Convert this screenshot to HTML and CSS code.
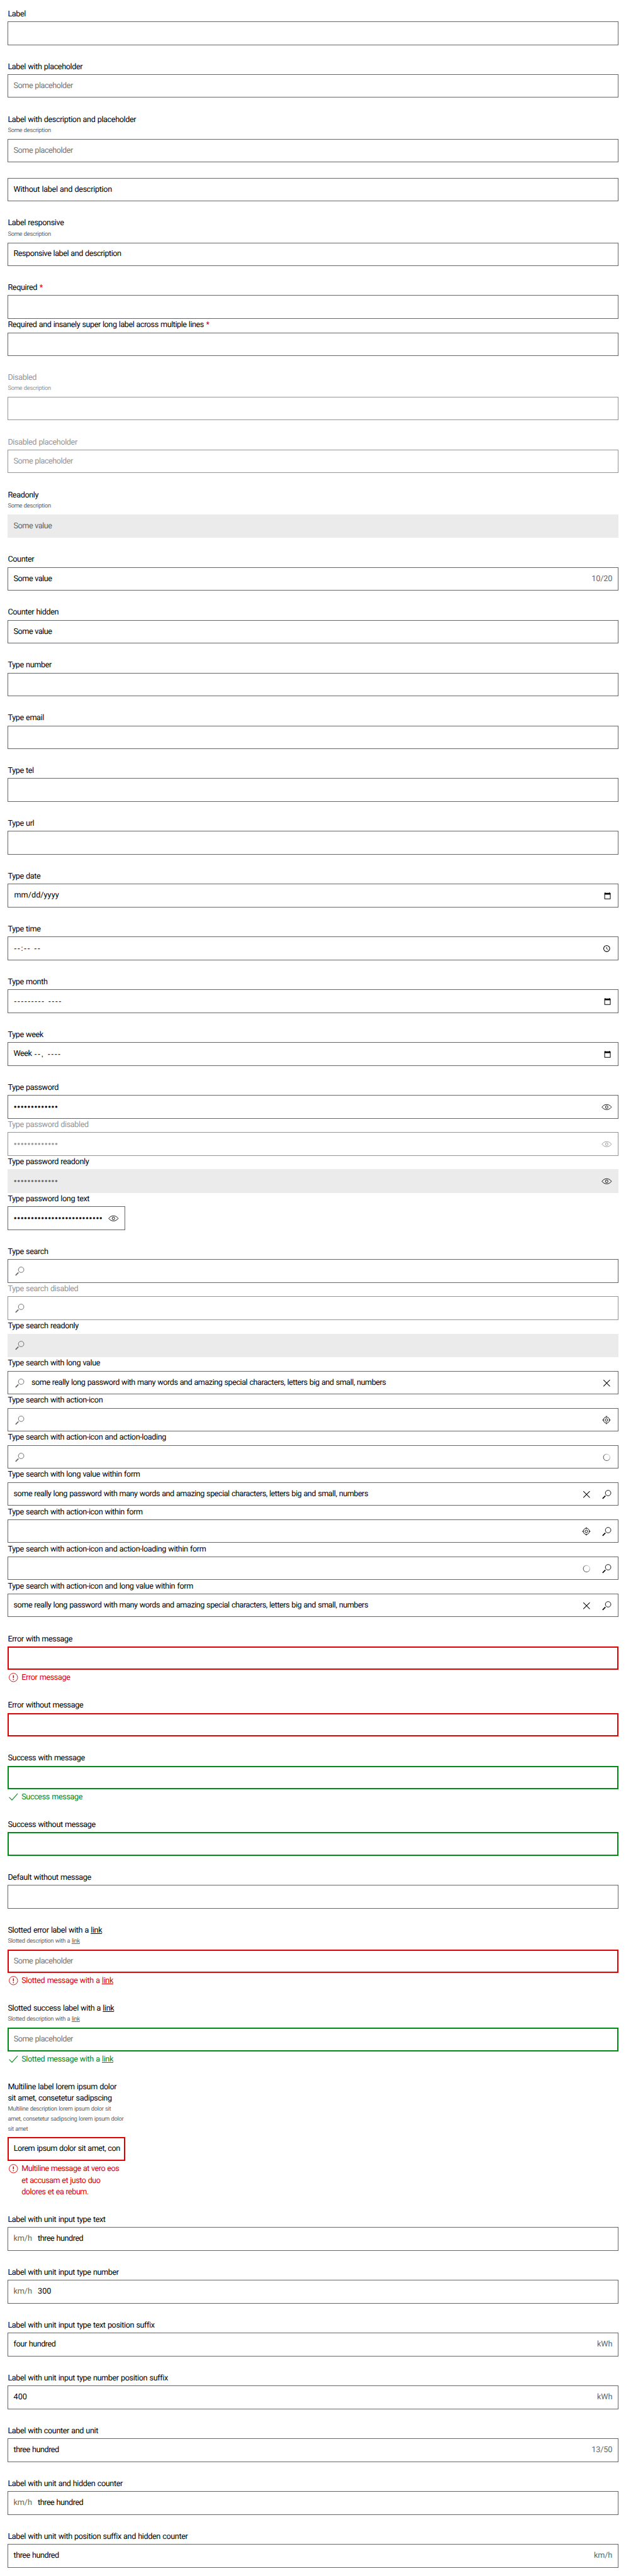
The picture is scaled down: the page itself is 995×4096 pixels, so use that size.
FILE: index.html
```
<!DOCTYPE html>
<html lang="en">
<head>
<meta charset="utf-8">
<title>Text field wrapper</title>
<link rel="stylesheet" href="styles.css">
</head>
<body>
<svg class="defs" aria-hidden="true">
  <defs>
    <linearGradient id="fade" x1="0" y1="1" x2="1" y2="0">
      <stop offset="0.3" stop-color="#535457"/>
      <stop offset="1" stop-color="#535457" stop-opacity="0.05"/>
    </linearGradient>
  </defs>
  <symbol id="search" viewBox="0 0 24 24"><circle cx="14.9" cy="9" r="5.6" fill="none" stroke="currentColor" stroke-width="1.2"/><path d="M9.4 14.6 3.6 20.4" fill="none" stroke="currentColor" stroke-width="2"/></symbol>
  <symbol id="eye" viewBox="0 0 24 24"><path d="M2.3 12C4.8 8.6 8.1 6.8 12 6.8s7.2 1.8 9.7 5.2c-2.5 3.4-5.8 5.2-9.7 5.2S4.8 15.4 2.3 12Z" fill="none" stroke="currentColor" stroke-width="1.2"/><circle cx="12" cy="12" r="2.6" fill="none" stroke="currentColor" stroke-width="1.2"/></symbol>
  <symbol id="close" viewBox="0 0 24 24"><path d="m5.4 5.400 13.200 13.200M18.600 5.400 5.400 18.600" fill="none" stroke="currentColor" stroke-width="1.300"/></symbol>
  <symbol id="target" viewBox="0 0 24 24"><g fill="none" stroke="currentColor" stroke-width="1.200"><circle cx="11.500" cy="11.500" r="6.200"/><circle cx="11.500" cy="11.500" r="2.700"/><path d="M11.500 3v2.800M11.500 17.200V20M3 11.500h2.800M17.200 11.500H20"/></g></symbol>
  <symbol id="spinner" viewBox="0 0 24 24"><circle cx="12" cy="12" r="6.700" fill="none" stroke="url(#fade)" stroke-width="1.300"/></symbol>
  <symbol id="calendar" viewBox="0 0 24 24"><path d="M8.700 5v2M17.700 5v2" stroke="#000" stroke-width="1.300"/><path d="M7.800 6h11.600a.6.6 0 0 1 .6.600V18.400a.6.600 0 0 1-.6.600H7.800a.6.600 0 0 1-.6-.6V6.600A.6.600 0 0 1 7.800 6Zm.7 3.800v7.900h10.200V9.800Z" fill="#000" fill-rule="evenodd"/></symbol>
  <symbol id="clock" viewBox="0 0 24 24"><circle cx="12" cy="12" r="6.200" fill="none" stroke="#000" stroke-width="1.400"/><path d="M11.700 8.500v3.700l3.100 1.700" fill="none" stroke="#000" stroke-width="1.100"/></symbol>
  <symbol id="error" viewBox="0 0 24 24"><circle cx="12" cy="12" r="8.600" fill="none" stroke="currentColor" stroke-width="1.200"/><path d="M12 7.300v6M12 15v2" stroke="currentColor" stroke-width="2"/></symbol>
  <symbol id="check" viewBox="0 0 24 24"><path d="m3.300 12.500 5.700 5.700L20.700 5" fill="none" stroke="currentColor" stroke-width="1.300"/></symbol>
</svg>

<section><label>Label</label><div class="box"></div></section>
<section><label>Label with placeholder</label><div class="box hint">Some placeholder</div></section>
<section><label>Label with description and placeholder</label><p class="desc">Some description</p><div class="box hint">Some placeholder</div></section>
<section><div class="box loose">Without label and description</div></section>
<section><label>Label responsive</label><p class="desc">Some description</p><div class="box">Responsive label and description</div></section>
<section>
  <label>Required <i>*</i></label><div class="box"></div>
  <label class="tight">Required and insanely super long label across multiple lines <i>*</i></label><div class="box"></div>
</section>
<section class="disabled"><label>Disabled</label><p class="desc">Some description</p><div class="box"></div></section>
<section class="disabled"><label>Disabled placeholder</label><div class="box">Some placeholder</div></section>
<section><label>Readonly</label><p class="desc">Some description</p><div class="box readonly">Some value</div></section>
<section><label>Counter</label><div class="box">Some value<span class="unit end">10/20</span></div></section>
<section><label>Counter hidden</label><div class="box">Some value</div></section>
<section><label>Type number</label><div class="box"></div></section>
<section><label>Type email</label><div class="box"></div></section>
<section><label>Type tel</label><div class="box"></div></section>
<section><label>Type url</label><div class="box"></div></section>
<section><label>Type date</label><div class="box"><span class="date">mm/dd/yyyy</span><span class="tools"><svg><use href="#calendar"/></svg></span></div></section>
<section><label>Type time</label><div class="box"><span class="dash">--:-- --</span><span class="tools"><svg><use href="#clock"/></svg></span></div></section>
<section><label>Type month</label><div class="box"><span class="dash">--------- ----</span><span class="tools"><svg><use href="#calendar"/></svg></span></div></section>
<section><label>Type week</label><div class="box"><span class="week">Week</span><span class="dash">--, ----</span><span class="tools"><svg><use href="#calendar"/></svg></span></div></section>
<section>
  <label>Type password</label><div class="box"><span class="dots">•••••••••••••</span><span class="tools"><svg><use href="#eye"/></svg></span></div>
  <div class="disabled"><label>Type password disabled</label><div class="box"><span class="dots">•••••••••••••</span><span class="tools"><svg><use href="#eye"/></svg></span></div></div>
  <label>Type password readonly</label><div class="box readonly"><span class="dots">•••••••••••••</span><span class="tools"><svg><use href="#eye"/></svg></span></div>
  <label>Type password long text</label><div class="box narrow"><span class="dots">••••••••••••••••••••••••••</span><span class="tools"><svg><use href="#eye"/></svg></span></div>
</section>
<section>
  <label>Type search</label><div class="box"><svg class="lead"><use href="#search"/></svg></div>
  <div class="disabled"><label>Type search disabled</label><div class="box"><svg class="lead"><use href="#search"/></svg></div></div>
  <label>Type search readonly</label><div class="box readonly"><svg class="lead"><use href="#search"/></svg></div>
  <label>Type search with long value</label><div class="box"><svg class="lead"><use href="#search"/></svg>some really long password with many words and amazing special characters, letters big and small, numbers<span class="tools"><svg><use href="#close"/></svg></span></div>
  <label>Type search with action-icon</label><div class="box"><svg class="lead"><use href="#search"/></svg><span class="tools"><svg><use href="#target"/></svg></span></div>
  <label>Type search with action-icon and action-loading</label><div class="box"><svg class="lead"><use href="#search"/></svg><span class="tools"><svg><use href="#spinner"/></svg></span></div>
  <label>Type search with long value within form</label><div class="box">some really long password with many words and amazing special characters, letters big and small, numbers<span class="tools"><svg><use href="#close"/></svg><svg><use href="#search"/></svg></span></div>
  <label>Type search with action-icon within form</label><div class="box"><span class="tools"><svg><use href="#target"/></svg><svg><use href="#search"/></svg></span></div>
  <label>Type search with action-icon and action-loading within form</label><div class="box"><span class="tools"><svg><use href="#spinner"/></svg><svg><use href="#search"/></svg></span></div>
  <label>Type search with action-icon and long value within form</label><div class="box">some really long password with many words and amazing special characters, letters big and small, numbers<span class="tools"><svg><use href="#close"/></svg><svg><use href="#search"/></svg></span></div>
</section>
<section class="error"><label>Error with message</label><div class="box"></div><div class="msg"><svg><use href="#error"/></svg><span>Error message</span></div></section>
<section class="error"><label>Error without message</label><div class="box"></div></section>
<section class="success"><label>Success with message</label><div class="box"></div><div class="msg"><svg><use href="#check"/></svg><span>Success message</span></div></section>
<section class="success"><label>Success without message</label><div class="box"></div></section>
<section><label>Default without message</label><div class="box"></div></section>
<section class="error"><label>Slotted error label with a <u>link</u></label><p class="desc">Slotted description with a <u>link</u></p><div class="box hint">Some placeholder</div><div class="msg"><svg><use href="#error"/></svg><span>Slotted message with a <u>link</u></span></div></section>
<section class="success"><label>Slotted success label with a <u>link</u></label><p class="desc">Slotted description with a <u>link</u></p><div class="box hint">Some placeholder</div><div class="msg"><svg><use href="#check"/></svg><span>Slotted message with a <u>link</u></span></div></section>
<section class="error multi"><label>Multiline label lorem ipsum dolor<br>sit amet, consetetur sadipscing</label><p class="desc">Multiline description lorem ipsum dolor sit<br>amet, consetetur sadipscing lorem ipsum dolor<br>sit amet</p><div class="box narrow">Lorem ipsum dolor sit amet, con</div><div class="msg"><svg><use href="#error"/></svg><span>Multiline message at vero eos<br>et accusam et justo duo<br>dolores et ea rebum.</span></div></section>
<section><label>Label with unit input type text</label><div class="box"><span class="unit start">km/h</span>three hundred</div></section>
<section><label>Label with unit input type number</label><div class="box"><span class="unit start">km/h</span><span class="num">300</span></div></section>
<section><label>Label with unit input type text position suffix</label><div class="box">four hundred<span class="unit end">kWh</span></div></section>
<section><label>Label with unit input type number position suffix</label><div class="box"><span class="num">400</span><span class="unit end">kWh</span></div></section>
<section><label>Label with counter and unit</label><div class="box">three hundred<span class="unit end">13/50</span></div></section>
<section><label>Label with unit and hidden counter</label><div class="box"><span class="unit start">km/h</span>three hundred</div></section>
<section><label>Label with unit with position suffix and hidden counter</label><div class="box">three hundred<span class="unit end">km/h</span></div></section>
</body>
</html>
```
FILE: styles.css
```
html {
  font-size: 12.44px;
}

* {
  box-sizing: border-box;
}

body {
  margin: 0;
  background: #fff;
  color: #010205;
  font: 1.02rem/1.5rem Roboto, "Liberation Sans", sans-serif;
  letter-spacing: -0.032em;
  word-spacing: 0.045em;
  text-rendering: geometricPrecision;
}

svg {
  display: block;
  flex: none;
  width: 1.5rem;
  height: 1.5rem;
}

.defs {
  position: absolute;
  width: 0;
  height: 0;
}

section {
  padding: 1rem;
}

label {
  display: block;
  height: 1.75rem;
  padding-top: 0.11rem;
  white-space: nowrap;
}

label i {
  margin-left: 0.03rem;
  color: #e00000;
  font-style: normal;
}

.tight {
  letter-spacing: -0.037em;
}

.desc {
  margin: -0.25rem 0 0.43rem;
  padding-top: 0.07rem;
  color: #626669;
  font-size: 0.76rem;
  line-height: 1.25rem;
  letter-spacing: -0.038em;
  white-space: nowrap;
}

.box {
  display: flex;
  align-items: center;
  height: 3rem;
  padding: 0.1rem 0.67rem 0 0.65rem;
  border: 1px solid #626669;
  letter-spacing: -0.039em;
  white-space: nowrap;
}

.loose {
  letter-spacing: -0.026em;
}

.hint {
  color: #757575;
}

.readonly {
  background: #ebebeb;
  border-color: #ebebeb;
  color: #626669;
}

.readonly .tools {
  color: #010205;
}

.disabled,
.disabled .desc {
  color: #949598;
}

.disabled .box {
  border-color: #949598;
}

.disabled .lead {
  color: #626669;
}

.error .box {
  border: 2px solid #e00000;
  padding-left: 0.58rem;
}

.success .box {
  border: 2px solid #018a16;
  padding-left: 0.58rem;
}

.narrow {
  width: 15rem;
}

.lead {
  margin: 0 0.77rem 0 0.02rem;
  color: #626669;
}

.tools {
  display: flex;
  gap: 1rem;
  margin-left: auto;
}

.unit {
  color: #626669;
  letter-spacing: -0.01em;
}

.start {
  width: 3.1rem;
}

.end {
  margin-left: auto;
}

.num {
  letter-spacing: 0;
}

.date {
  padding-left: 0.07rem;
  letter-spacing: 0.003em;
}

.week {
  width: 2.6rem;
}

.dash {
  padding-left: 0.06rem;
  font-family: "Liberation Sans", sans-serif;
  font-size: 1rem;
  letter-spacing: 0.107em;
}

.dots {
  padding-left: 0.04rem;
  font-family: "Liberation Sans", sans-serif;
  font-size: 1rem;
  letter-spacing: 0.0875em;
}

.msg {
  display: flex;
  gap: 0.25rem;
  padding-top: 0.25rem;
}

.msg span {
  padding-top: 0.08rem;
  margin-bottom: -0.08rem;
}

.error .msg {
  color: #e00000;
}

.success .msg {
  color: #018a16;
}

.multi label {
  height: 3.25rem;
}

.multi .msg {
  letter-spacing: -0.042em;
}
```
